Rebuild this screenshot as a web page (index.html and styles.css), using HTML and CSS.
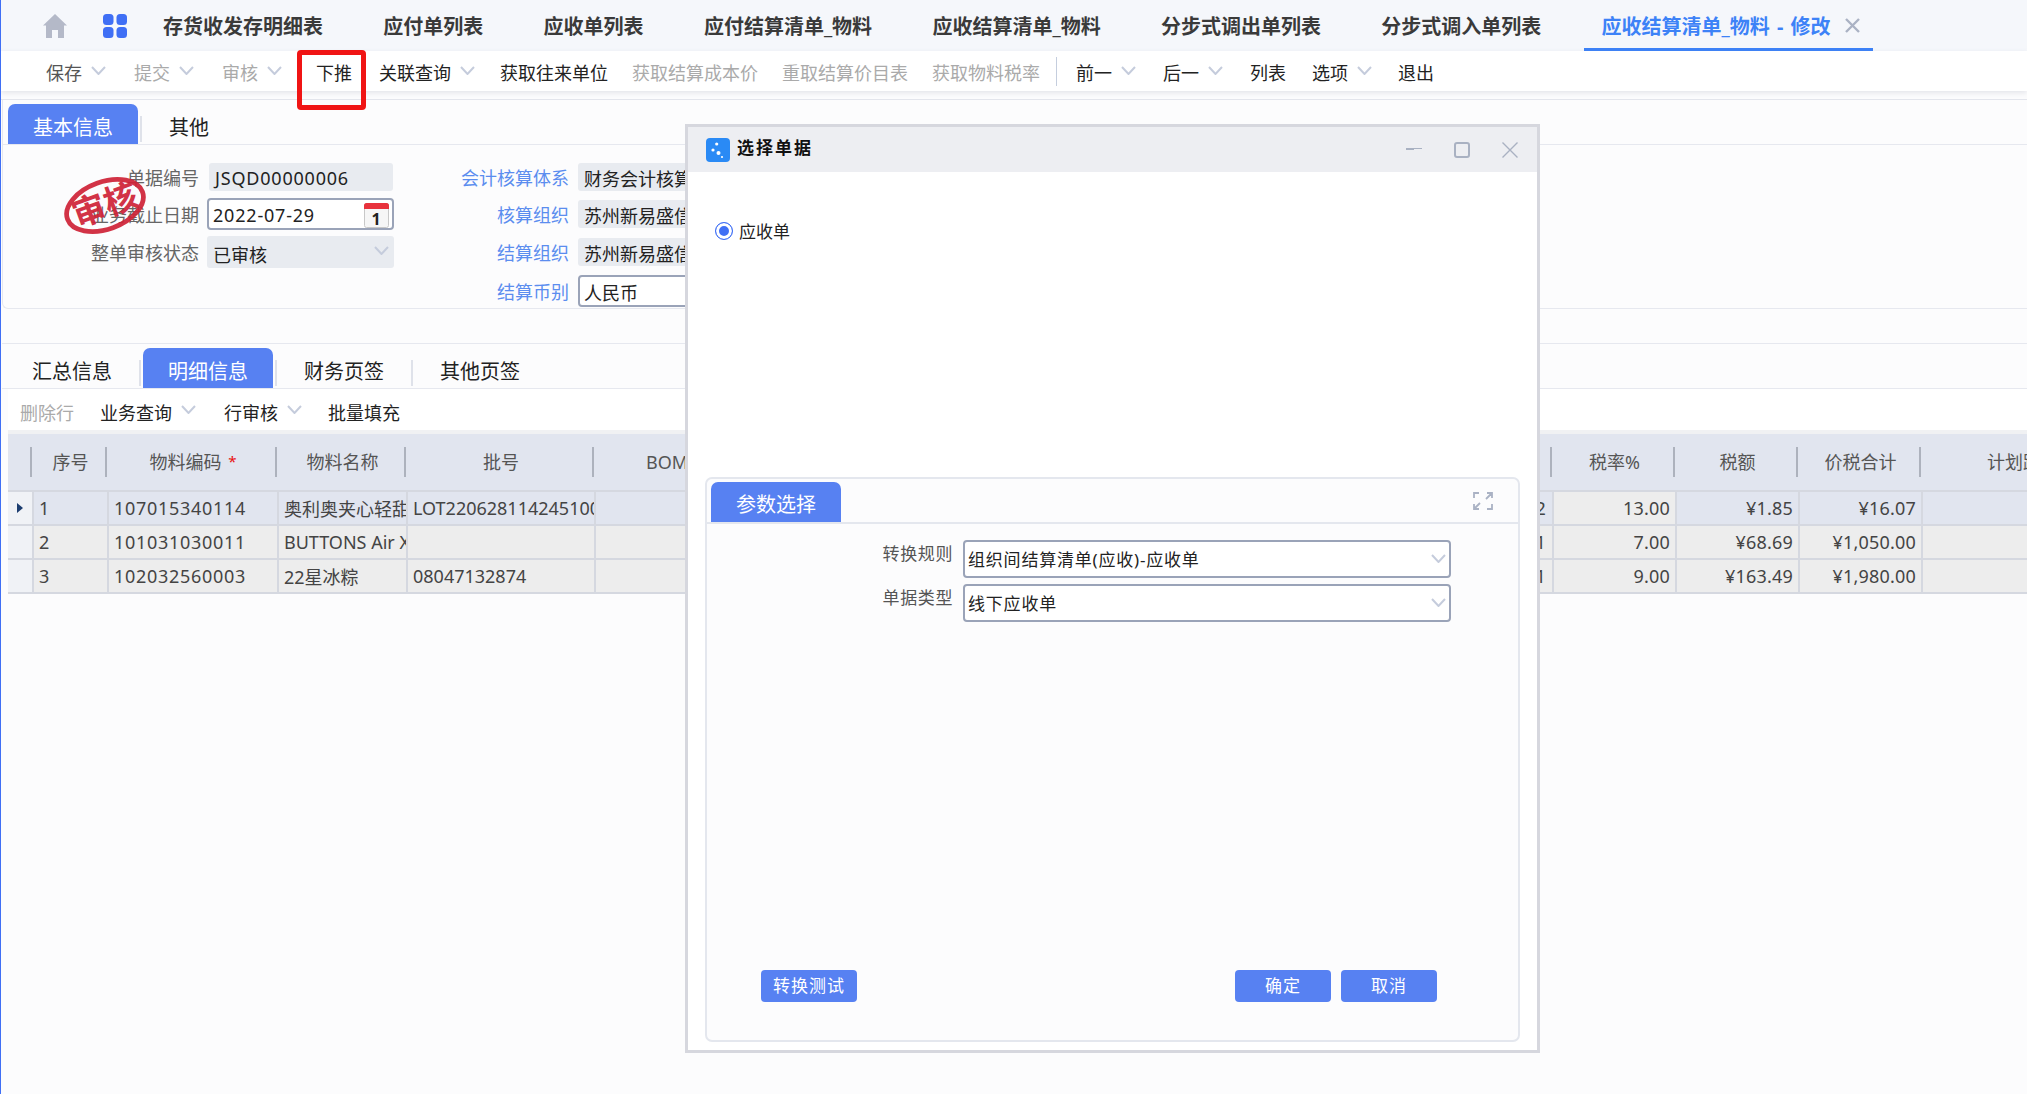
FILE: index.html
```html
<!DOCTYPE html>
<html lang="zh-CN">
<head>
<meta charset="UTF-8">
<title>应收结算清单_物料 - 修改</title>
<link rel="stylesheet" href="styles.css">
</head>
<body>

<svg class="sprite" width="0" height="0">
    <symbol id="chev" viewBox="0 0 15 9"><polyline points="1,1 7.5,8 14,1" fill="none" stroke="#c5ccdc" stroke-width="2"/></symbol>
</svg>

<!-- Top tab bar -->
<header class="tabbar">
    <div class="tabbar-icons">
        <svg width="24" height="24" viewBox="0 0 24 24"><path d="M12 0 L24 11.5 L21 11.5 L21 24 L15 24 L15 16 L9 16 L9 24 L3 24 L3 11.5 L0 11.5 Z" fill="#b4b9c8"/></svg>
        <svg width="24" height="24" viewBox="0 0 24 24" fill="#3f6ff5"><rect x="0" y="0" width="10.5" height="11" rx="3.5"/><rect x="13.5" y="0" width="10.5" height="11" rx="3.5"/><rect x="0" y="13" width="10.5" height="11" rx="3.5"/><rect x="13.5" y="13" width="10.5" height="11" rx="3.5"/></svg>
    </div>
    <nav class="tabs">
        <a class="tab">存货收发存明细表</a>
        <a class="tab">应付单列表</a>
        <a class="tab">应收单列表</a>
        <a class="tab">应付结算清单_物料</a>
        <a class="tab">应收结算清单_物料</a>
        <a class="tab">分步式调出单列表</a>
        <a class="tab">分步式调入单列表</a>
        <a class="tab tab-active">应收结算清单_物料 - 修改
            <svg width="15" height="15" viewBox="0 0 15 15"><path d="M1 1 L14 14 M14 1 L1 14" stroke="#aab2c4" stroke-width="2.4"/></svg>
        </a>
    </nav>
</header>

<!-- Main toolbar -->
<div class="toolbar">
    <span class="tool tool-main mr3">保存<svg class="chev"><use href="#chev"/></svg></span>
    <span class="tool off mr3">提交<svg class="chev"><use href="#chev"/></svg></span>
    <span class="tool off mr9">审核<svg class="chev"><use href="#chev"/></svg></span>
    <span class="tool mr2">下推</span>
    <span class="tool">关联查询<svg class="chev"><use href="#chev"/></svg></span>
    <span class="tool less1">获取往来单位</span>
    <span class="tool off less1">获取结算成本价</span>
    <span class="tool off less1">重取结算价目表</span>
    <span class="tool off">获取物料税率</span>
    <span class="tool-line"></span>
    <span class="tool mr2">前一<svg class="chev"><use href="#chev"/></svg></span>
    <span class="tool mr2">后一<svg class="chev"><use href="#chev"/></svg></span>
    <span class="tool mr1">列表</span>
    <span class="tool mr1">选项<svg class="chev"><use href="#chev"/></svg></span>
    <span class="tool">退出</span>
</div>

<main class="main">
    <!-- Header form -->
    <section class="card">
        <div class="panel-tabs">
            <a class="panel-tab on">基本信息</a>
            <span class="tab-sep"></span>
            <a class="panel-tab short">其他</a>
        </div>
        <svg class="stamp" width="84" height="59" viewBox="0 0 80 56">
            <g transform="rotate(-20 40 28)">
                <ellipse cx="40" cy="28" rx="38" ry="22.5" fill="none" stroke="#cf2337" stroke-width="4.5"/>
                <text x="40" y="39" text-anchor="middle" class="stamp-text">审核</text>
            </g>
        </svg>
        <div class="form">
            <div class="form-col form-left">
                <div class="row">
                    <label class="lbl">单据编号</label>
                    <div class="field ro num first">JSQD00000006</div>
                </div>
                <div class="row">
                    <label class="lbl">业务截止日期</label>
                    <div class="field input num">2022-07-29
                        <svg class="cal" width="25" height="25" viewBox="0 0 25 25">
                            <rect x="0.5" y="0.5" width="24" height="24" rx="2" fill="#f6f6f6" stroke="#c8c8c8"/>
                            <path d="M0 2.5 Q0 0 2.5 0 L22.5 0 Q25 0 25 2.5 L25 6 L0 6 Z" fill="#e8323c"/>
                            <text x="12.5" y="22" text-anchor="middle" class="cal-text">1</text>
                        </svg>
                    </div>
                </div>
                <div class="row">
                    <label class="lbl">整单审核状态</label>
                    <div class="field ro sel">已审核<svg class="chev"><use href="#chev"/></svg></div>
                </div>
            </div>
            <div class="form-col form-right">
                <div class="row">
                    <label class="lbl link">会计核算体系</label>
                    <div class="field ro wide">财务会计核算体系</div>
                </div>
                <div class="row">
                    <label class="lbl link">核算组织</label>
                    <div class="field ro wide">苏州新易盛信息</div>
                </div>
                <div class="row">
                    <label class="lbl link">结算组织</label>
                    <div class="field ro wide">苏州新易盛信息</div>
                </div>
                <div class="row">
                    <label class="lbl link">结算币别</label>
                    <div class="field input wide">人民币</div>
                </div>
            </div>
        </div>
    </section>

    <!-- Detail grid -->
    <section class="detail">
        <div class="panel-tabs">
            <a class="panel-tab">汇总信息</a>
            <span class="tab-sep"></span>
            <a class="panel-tab on">明细信息</a>
            <span class="tab-sep"></span>
            <a class="panel-tab">财务页签</a>
            <span class="tab-sep"></span>
            <a class="panel-tab">其他页签</a>
        </div>
        <div class="subbar">
            <span class="tool off">删除行</span>
            <span class="tool mr2">业务查询<svg class="chev"><use href="#chev"/></svg></span>
            <span class="tool">行审核<svg class="chev"><use href="#chev"/></svg></span>
            <span class="tool">批量填充</span>
        </div>
        <table class="grid">
            <colgroup>
                <col class="c-mark"><col class="c-seq"><col class="c-code"><col class="c-name"><col class="c-lot">
                <col class="c-bom"><col class="c-mid"><col class="c-money"><col class="c-money"><col class="c-money"><col class="c-plan">
            </colgroup>
            <thead>
                <tr>
                    <th></th><th>序号</th><th>物料编码 <i class="req">*</i></th><th>物料名称</th><th>批号</th>
                    <th>BOM版本</th><th></th><th>税率%</th><th>税额</th><th>价税合计</th><th class="left">计划跟踪号</th>
                </tr>
            </thead>
            <tbody>
                <tr class="cur">
                    <td class="mark"><span class="arrow"></span></td><td>1</td><td class="code">107015340114</td><td>奥利奥夹心轻甜饼干</td><td>LOT220628114245100</td>
                    <td></td><td class="r stub">2</td><td class="r plain">13.00</td><td class="r">¥1.85</td><td class="r">¥16.07</td><td></td>
                </tr>
                <tr>
                    <td class="mark"></td><td>2</td><td class="code">101031030011</td><td>BUTTONS Air X</td><td></td>
                    <td></td><td class="r stub">1</td><td class="r">7.00</td><td class="r">¥68.69</td><td class="r">¥1,050.00</td><td></td>
                </tr>
                <tr>
                    <td class="mark"></td><td>3</td><td class="code">102032560003</td><td>22星冰粽</td><td>08047132874</td>
                    <td></td><td class="r stub">1</td><td class="r">9.00</td><td class="r">¥163.49</td><td class="r">¥1,980.00</td><td></td>
                </tr>
            </tbody>
        </table>
    </section>
</main>

<!-- Red annotation round the push button -->
<div class="mark-box"></div>

<!-- Dialog -->
<div class="dialog">
    <div class="dialog-head">
        <svg width="24" height="24" viewBox="0 0 24 24">
            <rect width="24" height="24" rx="4" fill="#2a8af5"/>
            <circle cx="10.7" cy="6" r="1.6" fill="#fff"/><circle cx="7" cy="12" r="1.6" fill="#fff"/>
            <circle cx="12.5" cy="15" r="2" fill="#fff"/><circle cx="16" cy="19" r="1.1" fill="#fff"/>
        </svg>
        <span class="dialog-title">选择单据</span>
        <div class="win-btns">
            <svg width="16" height="16" viewBox="0 0 16 16"><path d="M0 6.5 H16 M0 7.5 H8" stroke="#a9b1c2" stroke-width="1"/></svg>
            <svg width="16" height="16" viewBox="0 0 16 16"><rect x="1" y="1" width="14" height="14" rx="2" fill="none" stroke="#a9b1c2" stroke-width="2"/></svg>
            <svg width="16" height="16" viewBox="0 0 16 16"><path d="M0.5 0.5 L15.5 15.5 M15.5 0.5 L0.5 15.5" stroke="#a9b1c2" stroke-width="1.4"/></svg>
        </div>
    </div>
    <div class="dialog-body">
        <div class="radio-row"><span class="radio"></span>应收单</div>
        <div class="param">
            <div class="param-head">
                <a class="panel-tab on">参数选择</a>
                <svg class="expand" width="20" height="18" viewBox="0 0 20 18" fill="none" stroke="#aab2c4" stroke-width="1.8">
                    <path d="M6 1 H1 V6 M14 1 H19 V6 M19 1 L13 7 M1 12 V17 H6 M1 17 L7 11 M19 12 V17 H14"/>
                </svg>
            </div>
            <div class="param-form">
                <div class="param-row">
                    <label class="param-lbl">转换规则</label>
                    <div class="param-sel">组织间结算清单(应收)-应收单<svg class="chev"><use href="#chev"/></svg></div>
                </div>
                <div class="param-row">
                    <label class="param-lbl">单据类型</label>
                    <div class="param-sel">线下应收单<svg class="chev"><use href="#chev"/></svg></div>
                </div>
            </div>
            <div class="param-foot">
                <button class="btn">转换测试</button>
                <button class="btn push-right">确定</button>
                <button class="btn">取消</button>
            </div>
        </div>
    </div>
</div>

</body>
</html>
```

FILE: styles.css
```css
* {
    box-sizing: border-box;
}

html, body {
    height: 100%;
}

body {
    margin: 0;
    height: 1094px;
    overflow: hidden;
    background-color: #fcfcfd;
    border-left: 1px solid #3f6ff5;
    font-family: "Noto Sans", "Noto Sans CJK SC", sans-serif;
    font-size: 18px;
    color: #333;
}

.sprite {
    display: block;
    height: 0;
}

.chev {
    width: 15px;
    height: 9px;
    flex: none;
}

/* Top tabs */
.tabbar {
    display: flex;
    align-items: center;
    height: 51px;
    padding-left: 42px;
    background-color: #f5f7fb;
}

.tabbar-icons {
    display: flex;
    gap: 36px;
}

.tabs {
    display: flex;
    align-items: center;
    gap: 24.3px;
    height: 100%;
    margin-left: 18px;
}

.tab {
    display: flex;
    align-items: center;
    height: 100%;
    padding: 0 18px;
    font-size: 20px;
    font-weight: 700;
    color: #3a3a3a;
    white-space: nowrap;
}

.tab-active {
    gap: 14px;
    padding-right: 13px;
    padding-top: 3px;
    word-spacing: 2px;
    color: #3d82f7;
    border-bottom: 3px solid #3d82f7;
}

/* Toolbars */
.toolbar {
    display: flex;
    align-items: center;
    gap: 25px;
    height: 40px;
    padding: 2px 0 0 45px;
    background-color: #fff;
    box-shadow: 0 2px 5px rgba(120, 130, 150, .18);
    position: relative;
}

.tool {
    display: flex;
    align-items: center;
    gap: 9px;
    color: #222;
    white-space: nowrap;
}

.tool-main {
    color: #555;
}

.tool .chev {
    margin-top: -4px;
}

.tool.off {
    color: #aaa;
}

.mr1 { margin-right: 1px; }
.mr2 { margin-right: 2px; }
.mr3 { margin-right: 3px; }
.mr9 { margin-right: 9px; }
.less1 { margin-right: -1px; }

.tool-line {
    width: 1px;
    height: 29px;
    margin: -2px -6px 0 -9px;
    background-color: #c5cede;
}

.main {
    margin-top: 8px;
    padding-left: 1px;
    border-top: 1px solid #e3e5ec;
}

/* Panel tabs */
.panel-tabs {
    display: flex;
    align-items: flex-end;
    height: 45px;
    padding: 4px 0 0 5px;
    border-bottom: 1px solid #e6e8ef;
}

.panel-tab {
    display: flex;
    align-items: center;
    justify-content: center;
    width: 130px;
    height: 40px;
    padding-top: 4px;
    font-size: 20px;
    color: #222;
    border-radius: 7px 7px 0 0;
}

.panel-tab.on {
    background-color: #5781f2;
    color: #fff;
}

.panel-tab.short {
    width: 90px;
}

.tab-sep {
    width: 2px;
    height: 26px;
    margin: 0 2px 2px;
    background-color: #dfe2ea;
}

/* Header form */
.card {
    position: relative;
    height: 209px;
    border-bottom: 1px solid #e6e8ef;
    border-left: 1px solid #e6e8ef;
    border-radius: 0 0 0 6px;
}

.stamp {
    position: absolute;
    left: 60px;
    top: 76px;
    opacity: .92;
}

.stamp-text {
    font-size: 32px;
    font-weight: 700;
    fill: #cf2337;
}

.form {
    display: flex;
    padding-top: 18px;
}

.form-col {
    display: grid;
    align-items: start;
}

.form-left {
    grid-template-rows: 35px 38px 32px;
    width: 394px;
}

.form-left .lbl {
    width: 196px;
    margin-right: 8px;
}

.form-right {
    grid-template-rows: 37px 38px 37px 32px;
}

.form-right .lbl {
    width: 172px;
    margin-right: 9px;
}

.row {
    display: flex;
    align-items: center;
}

.lbl {
    flex: none;
    text-align: right;
    color: #666;
    font-size: 18px;
}

.lbl.link {
    color: #5b8def;
}

.field {
    position: relative;
    display: flex;
    align-items: center;
    justify-content: space-between;
    width: 187px;
    padding: 2px 5px 0 6px;
    color: #222;
    white-space: nowrap;
}

.field.num {
    letter-spacing: .8px;
}

.field.ro {
    height: 28px;
    background-color: #e8ebf0;
    border-radius: 3px;
}

.field.first {
    width: 184px;
    margin-left: 2px;
}

.field.sel {
    height: 32px;
    padding-top: 4px;
}

.field.sel .chev {
    margin-top: -8px;
}

.field.input {
    height: 32px;
    background-color: #fff;
    border: 2px solid #9aa3b8;
    border-radius: 4px;
    padding-left: 4px;
}

.field.wide {
    width: 240px;
}

.cal-text {
    font-size: 16px;
    font-weight: 700;
    fill: #222;
}

.cal {
    flex: none;
    margin-right: -2px;
}

/* Detail grid */
.detail {
    margin-top: 34px;
    border-top: 1px solid #e6e8ef;
}

.subbar {
    display: flex;
    align-items: center;
    gap: 26px;
    height: 45px;
    padding: 4px 0 0 12px;
    margin-left: 6px;
    background-color: #fff;
    border-bottom: 4px solid #f0f1f3;
}

.grid {
    table-layout: fixed;
    width: 2114px;
    margin-left: 6px;
    border-collapse: collapse;
    color: #444;
}

.c-mark { width: 25px; }
.c-seq { width: 75px; }
.c-code { width: 170px; }
.c-name { width: 129px; }
.c-lot { width: 188px; }
.c-bom { width: 180px; }
.c-mid { width: 778px; }
.c-money { width: 123px; }
.c-plan { width: 200px; }

.grid th {
    height: 57px;
    padding: 0 0 2px;
    font-weight: 400;
    color: #555;
    white-space: nowrap;
    overflow: hidden;
    background: #e1e5ef linear-gradient(#adb2bd, #adb2bd) no-repeat right 1px center / 2px 30px;
    border-bottom: 2px solid #d5d8e0;
}

.grid th.left {
    text-align: left;
    padding-left: 65px;
}

.req {
    font-style: normal;
    font-size: 15px;
    color: #e81010;
    margin-left: 2px;
    vertical-align: 2px;
}

.grid td {
    height: 34px;
    padding: 0 5px;
    white-space: nowrap;
    overflow: hidden;
    background-color: #ededed;
    border-right: 2px solid #d5d8e0;
    border-bottom: 2px solid #d5d8e0;
}

.grid td.code {
    letter-spacing: .7px;
}

.grid tr.cur td {
    background-color: #e1e5ef;
}

.grid td.r {
    text-align: right;
    letter-spacing: .2px;
}

.grid td.stub {
    padding-right: 6px;
}

.grid tr.cur td.plain {
    background-color: #ededed;
}

.grid td.mark,
.grid tr.cur td.mark {
    padding-left: 9px;
    background-color: #f0f2f6;
}

.arrow {
    display: block;
    width: 0;
    height: 0;
    border-left: 6px solid #1c3d70;
    border-top: 5px solid transparent;
    border-bottom: 5px solid transparent;
}

/* Annotation */
.mark-box {
    position: absolute;
    left: 297px;
    top: 50px;
    width: 69px;
    height: 60px;
    border: 5px solid #f01414;
    border-radius: 4px;
}

/* Dialog */
.dialog {
    position: absolute;
    left: 685px;
    top: 124px;
    display: flex;
    flex-direction: column;
    width: 855px;
    height: 929px;
    background-color: #fff;
    border: 3px solid #d6d7de;
}

.dialog-head {
    display: flex;
    align-items: center;
    flex: none;
    height: 45px;
    padding: 0 19px 0 18px;
    background-color: #edeef2;
}

.dialog-title {
    margin: -6px 0 0 7px;
    font-size: 17px;
    font-weight: 700;
    letter-spacing: 2px;
    color: #111;
}

.win-btns {
    display: flex;
    gap: 32px;
    margin-left: auto;
    padding-top: 1px;
}

.dialog-body {
    flex: 1;
    display: flex;
    flex-direction: column;
    padding: 46px 17px 8px;
}

.radio-row {
    display: flex;
    align-items: center;
    gap: 6px;
    margin-left: 10px;
    font-size: 17px;
    color: #222;
}

.radio {
    width: 18px;
    height: 18px;
    border-radius: 50%;
    background-color: #3f6ff5;
    border: 1.5px solid #3f6ff5;
    box-shadow: inset 0 0 0 3px #fff;
}

.param {
    display: flex;
    flex-direction: column;
    height: 565px;
    margin-top: auto;
    background-color: #fcfcfd;
    border: 2px solid #e4e7ee;
    border-radius: 7px;
}

.param-head {
    display: flex;
    align-items: center;
    justify-content: space-between;
    height: 45px;
    padding: 3px 25px 0 4px;
    border-bottom: 2px solid #e4e7ee;
}

.param-head .panel-tab {
    align-self: flex-end;
    padding-top: 2px;
}

.expand {
    margin-top: -2px;
}

.param-form {
    display: flex;
    flex-direction: column;
    gap: 6px;
    padding-top: 16px;
}

.param-row {
    display: flex;
    align-items: center;
    gap: 10px;
}

.param-lbl {
    width: 246px;
    margin-top: -13px;
    text-align: right;
    font-size: 17px;
    letter-spacing: .6px;
    color: #555;
}

.param-sel {
    display: flex;
    align-items: center;
    justify-content: space-between;
    width: 488px;
    height: 38px;
    padding: 0 3px 2px 3px;
    font-size: 17px;
    letter-spacing: .8px;
    color: #222;
    background-color: #fff;
    border: 2px solid #9aa3b8;
    border-radius: 4px;
}

.param-foot {
    display: flex;
    gap: 10px;
    margin-top: auto;
    padding: 0 81px 38px 54px;
}

.push-right {
    margin-left: auto;
}

.btn {
    width: 96px;
    height: 32px;
    padding: 0 0 3px;
    font-family: inherit;
    font-size: 17px;
    letter-spacing: 1px;
    color: #fff;
    background-color: #5781f2;
    border: none;
    border-radius: 4px;
}
```
